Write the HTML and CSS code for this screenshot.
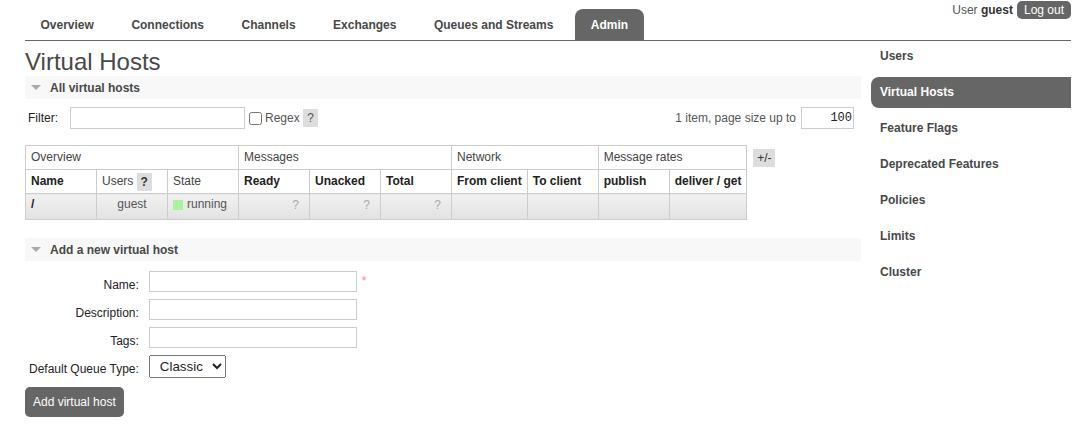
FILE: index.html
```html
<!DOCTYPE html>
<html lang="en">
<head>
<meta charset="utf-8">
<title>RabbitMQ Management: Virtual Hosts</title>
<link rel="stylesheet" href="styles.css">
</head>
<body>
<div class="page">
  <header class="topbar">
    <nav class="tabs">
      <a class="tab">Overview</a>
      <a class="tab">Connections</a>
      <a class="tab">Channels</a>
      <a class="tab">Exchanges</a>
      <a class="tab">Queues and Streams</a>
      <a class="tab active">Admin</a>
    </nav>
    <div class="login">
      <span class="who">User <b>guest</b></span>
      <button class="logout" type="button">Log out</button>
    </div>
  </header>

  <div class="layout">
    <main class="main">
      <h1 class="title">Virtual Hosts</h1>

      <section class="section">
        <h2 class="sec-head"><span class="tri"></span>All virtual hosts</h2>
        <div class="filter-row">
          <div class="filter-left">
            <span class="filter-label">Filter:</span>
            <input class="filter-input" type="text">
            <input class="regex-cb" type="checkbox">
            <span class="regex">Regex</span>
            <span class="help">?</span>
          </div>
          <div class="filter-right">
            <span class="count">1 item, page size up to</span>
            <input class="page-size" type="text" value="100">
          </div>
        </div>

        <div class="table-wrap">
          <table class="list">
            <thead>
              <tr>
                <th colspan="3">Overview</th>
                <th colspan="3">Messages</th>
                <th colspan="2">Network</th>
                <th colspan="2">Message rates</th>
              </tr>
              <tr class="cols">
                <th class="b">Name</th>
                <th>Users <span class="help hb">?</span></th>
                <th>State</th>
                <th class="b">Ready</th>
                <th class="b">Unacked</th>
                <th class="b">Total</th>
                <th class="b">From client</th>
                <th class="b">To client</th>
                <th class="b">publish</th>
                <th class="b">deliver / get</th>
              </tr>
            </thead>
            <tbody>
              <tr>
                <td class="name">/</td>
                <td class="c">guest</td>
                <td><span class="status"></span>running</td>
                <td class="r"><span class="q">?</span></td>
                <td class="r"><span class="q">?</span></td>
                <td class="r"><span class="q">?</span></td>
                <td></td>
                <td></td>
                <td></td>
                <td></td>
              </tr>
            </tbody>
          </table>
          <span class="toggle">+/-</span>
        </div>
      </section>

      <section class="section add">
        <h2 class="sec-head"><span class="tri"></span>Add a new virtual host</h2>
        <div class="add-form">
          <span class="fl">Name:</span>
          <div class="fv"><input class="ti" type="text"><span class="mand">*</span></div>
          <span class="fl">Description:</span>
          <div class="fv"><input class="ti" type="text"></div>
          <span class="fl">Tags:</span>
          <div class="fv"><input class="ti" type="text"></div>
          <span class="fl">Default Queue Type:</span>
          <div class="fv">
            <select class="qtype">
              <option>Classic</option>
              <option>Quorum</option>
              <option>Stream</option>
            </select>
          </div>
        </div>
        <button class="btn" type="button">Add virtual host</button>
      </section>
    </main>

    <aside class="side">
      <a class="side-item">Users</a>
      <a class="side-item active">Virtual Hosts</a>
      <a class="side-item">Feature Flags</a>
      <a class="side-item">Deprecated Features</a>
      <a class="side-item">Policies</a>
      <a class="side-item">Limits</a>
      <a class="side-item">Cluster</a>
    </aside>
  </div>
</div>
</body>
</html>
```

FILE: styles.css
```css
* { box-sizing: border-box; }

html, body {
  margin: 0;
  padding: 0;
  background: #fff;
}

body {
  font-family: "Liberation Sans", Arial, Helvetica, sans-serif;
  font-size: 12px;
  color: #484848;
}

.page {
  padding: 0 9px 0 25px;
}

/* ---------- top bar ---------- */
.topbar {
  display: flex;
  justify-content: space-between;
  height: 41px;
  border-bottom: 1px solid #666;
}

.tabs {
  display: flex;
  align-self: flex-end;
  gap: 6.5px;
}

.tab {
  display: flex;
  align-items: center;
  height: 31px;
  padding: 0 15.5px;
  font-weight: bold;
  color: #484848;
  text-decoration: none;
  border-radius: 8px 8px 0 0;
}

.tab.active {
  background: #666;
  color: #fff;
}

.login {
  align-self: flex-start;
  display: flex;
  align-items: center;
  margin-top: 1px;
  color: #555;
}

.who b { color: #333; }

.logout {
  margin-left: 4px;
  height: 18px;
  padding: 0 7px;
  border: 0;
  border-radius: 5px;
  background: #666;
  color: #fff;
  font: 12px "Liberation Sans", Arial, sans-serif;
  line-height: 18px;
}

/* ---------- layout ---------- */
.layout {
  display: flex;
  gap: 10px;
}

.main {
  width: 836px;
}

.title {
  margin: 7px 0 0;
  font-size: 24px;
  font-weight: normal;
  line-height: 28px;
  color: #484848;
}

.sec-head {
  display: flex;
  align-items: center;
  height: 23px;
  margin: 0;
  padding-left: 6px;
  background: #f8f8f8;
  font-size: 12px;
  font-weight: bold;
  color: #484848;
}

.tri {
  width: 0;
  height: 0;
  border-left: 5px solid transparent;
  border-right: 5px solid transparent;
  border-top: 5px solid #aaa;
  margin-right: 9px;
}

/* ---------- filter row ---------- */
.filter-row {
  display: flex;
  justify-content: space-between;
  align-items: center;
  margin-top: 8px;
  height: 22px;
}

.filter-left,
.filter-right {
  display: flex;
  align-items: center;
}

.filter-label {
  padding-left: 3px;
  color: #222;
}

.filter-input {
  margin: 0 0 0 12px;
  width: 175px;
  height: 22px;
  border: 1px solid #ccc;
  padding: 1px 2px;
  font: 12px "Liberation Sans", Arial, sans-serif;
}

.regex-cb {
  margin: 0 3px 0 4px;
  width: 13px;
  height: 13px;
}

.regex { color: #555; }

.help {
  display: inline-block;
  width: 15px;
  height: 18px;
  line-height: 18px;
  margin-left: 3.5px;
  background: #ddd;
  text-align: center;
  color: #555;
}

.count { color: #555; }

.page-size {
  margin: 0 7px 0 5px;
  width: 53px;
  height: 22px;
  border: 1px solid #ccc;
  padding: 1px 1px;
  text-align: right;
  font: 12px "Liberation Mono", "Courier New", monospace;
  color: #222;
}

/* ---------- table ---------- */
.table-wrap {
  display: flex;
  align-items: flex-start;
  gap: 6px;
  margin-top: 16px;
}

table.list {
  border-collapse: collapse;
  border: 1px solid #ccc;
}

table.list th,
table.list td {
  box-sizing: content-box;
  border: 1px solid #ccc;
  padding: 4px 5px 5px;
  line-height: 14px;
  font-size: 12px;
  text-align: left;
  white-space: nowrap;
}

table.list th {
  background: #fff;
  font-weight: normal;
  color: #444;
}

table.list tr.cols th {
  width: 60px;
}

table.list th.b {
  font-weight: bold;
  color: #222;
}

.help.hb {
  box-sizing: border-box;
  vertical-align: top;
  margin: -1px 0 -3px 0;
  font-weight: bold;
  color: #333;
}

table.list td {
  padding: 2px 5px 7px;
  background: linear-gradient(#f1f1f1, #e2e2e2);
  color: #555;
}

table.list td.name {
  font-weight: bold;
  color: #222;
}

table.list td.c { text-align: center; }

table.list td.r {
  text-align: right;
  padding-right: 10px;
}

.q {
  color: #aaa;
  vertical-align: -2px;
}

.status {
  display: inline-block;
  width: 10px;
  height: 10px;
  margin-right: 4px;
  vertical-align: -2px;
  background: #a8f2a0;
}

.toggle {
  margin-top: 4px;
  width: 22px;
  height: 18px;
  line-height: 18px;
  text-align: center;
  background: #ddd;
  color: #333;
}

/* ---------- add form ---------- */
.section.add {
  margin-top: 18px;
}

.add-form {
  display: grid;
  grid-template-columns: auto 1fr;
  column-gap: 10px;
  row-gap: 7px;
  margin-top: 10px;
}

.fl {
  padding: 7px 0 0 4px;
  text-align: right;
  line-height: 14px;
  color: #222;
}

.fv {
  display: flex;
  align-items: flex-start;
}

.ti {
  margin: 0;
  width: 208px;
  height: 21px;
  border: 1px solid #ccc;
  padding: 1px 2px;
  font: 12px "Liberation Sans", Arial, sans-serif;
}

.mand {
  margin-left: 5px;
  padding-top: 3px;
  line-height: 14px;
  color: #f88;
}

.qtype {
  margin: 0;
  width: 77px;
  height: 23px;
  padding-left: 6px;
  font: 13.33px "Liberation Sans", Arial, sans-serif;
  color: #222;
}

.btn {
  display: block;
  margin-top: 9px;
  height: 30px;
  padding: 0 8px;
  border: 0;
  border-radius: 5px;
  background: #666;
  color: #fff;
  font: 12px "Liberation Sans", Arial, sans-serif;
}

/* ---------- sidebar ---------- */
.side {
  width: 200px;
  display: flex;
  flex-direction: column;
  gap: 5px;
}

.side-item {
  display: block;
  padding: 8px 9px 9px;
  font-weight: bold;
  color: #484848;
  text-decoration: none;
  border-radius: 8px 0 0 8px;
}

.side-item.active {
  background: #666;
  color: #fff;
}
```
